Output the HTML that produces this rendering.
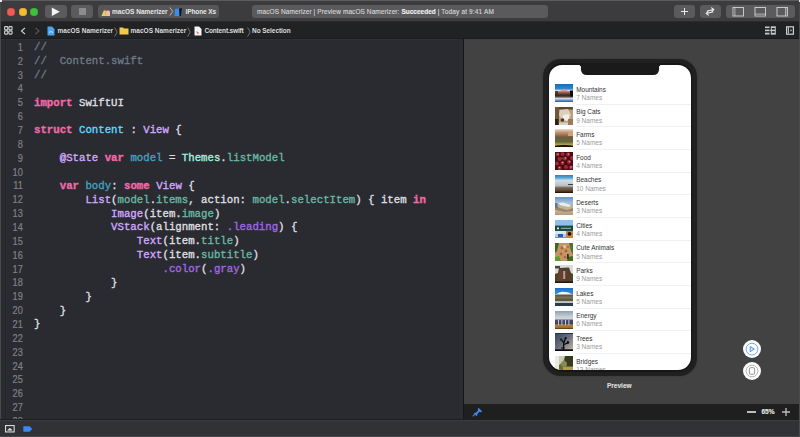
<!DOCTYPE html>
<html><head><meta charset="utf-8">
<style>
*{margin:0;padding:0;box-sizing:border-box}
html,body{width:800px;height:437px;overflow:hidden;background:#3a3a3c;font-family:"Liberation Sans",sans-serif}
.a{position:absolute}
#toolbar{left:0;top:0;width:800px;height:22px;background:#3c3c3e;border-top:1px solid #5c5c5e;border-bottom:1px solid #2a2a2c}
.btn{position:absolute;background:#5b5b5d;border-radius:3px}
.tl{position:absolute;width:8px;height:8px;border-radius:50%}
#jump{left:0;top:22px;width:800px;height:17px;background:#212224;border-bottom:1px solid #1b1c1e}
#editor{left:0;top:39px;width:463px;height:380px;background:#2a2b30;border-top:1px solid #303137;overflow:hidden}
#divider{left:463px;top:39px;width:1px;height:381px;background:#161618}
#preview{left:464px;top:39px;width:336px;height:365px;background:#424242}
#pbar{left:464px;top:404px;width:336px;height:16px;background:#1f1f1f}
#status{left:0;top:420px;width:800px;height:17px;background:#313235;border-top:1px solid #3b3c3f;border-bottom:1.5px solid #46474a}
.ln{position:absolute;left:0;width:22.8px;text-align:right;font-family:"Liberation Sans",sans-serif;font-size:10.2px;color:#808084;-webkit-text-stroke:0.2px currentColor;transform:scaleX(0.9);transform-origin:100% 50%}
.code{position:absolute;left:34px;font-family:"Liberation Mono",monospace;font-size:10.71px;white-space:pre;color:#dfdfe0;-webkit-text-stroke:0.35px currentColor}
.k{color:#f268a8;font-weight:bold}
.c{color:#6c7986}
.td{color:#5dd8ff}
.oc{color:#d0a8ff}
.od{color:#41a1c0}
.pt{color:#9ef1dd}
.pp{color:#67b7a4}
.of{color:#a167e6}
.tt{position:absolute;white-space:pre;font-size:6.5px;line-height:8px}
.row{position:absolute;left:0;width:142px;height:22.69px}
.thumb{position:absolute;left:5.7px;top:0;width:18px;height:18px}
.rt{position:absolute;left:26.9px;font-size:6.45px;white-space:pre;color:#333335}
.rs{position:absolute;left:26.9px;font-size:6.5px;white-space:pre;color:#9a9a9e}
.sep{position:absolute;left:26.5px;right:0;height:1px;background:#f0f0f3}
</style></head><body>

<!-- Toolbar -->
<div id="toolbar" class="a"></div>
<div class="tl" style="left:6.9px;top:7.5px;background:#f05c54;box-shadow:inset 0 0 0 0.5px #d04840"></div>
<div class="tl" style="left:18.6px;top:7.5px;background:#f2bd36;box-shadow:inset 0 0 0 0.5px #d09a28"></div>
<div class="tl" style="left:30.4px;top:7.5px;background:#40c040;box-shadow:inset 0 0 0 0.5px #30a030"></div>

<div class="btn" style="left:45px;top:5px;width:21.5px;height:13px"></div>
<svg class="a" style="left:51px;top:7px" width="10" height="10" viewBox="0 0 10 10"><path d="M0.8 0.6 L8.8 4.8 L0.8 9 Z" fill="#f4f4f4"/></svg>
<div class="btn" style="left:71px;top:5px;width:21.5px;height:13px"></div>
<div class="a" style="left:78.6px;top:7.9px;width:7.2px;height:7.1px;background:#8c8c8e"></div>

<div class="btn" style="left:97.5px;top:5px;width:121.5px;height:12.8px;background:#565658"></div>
<svg class="a" style="left:100px;top:6.5px" width="11" height="10" viewBox="0 0 11 10"><path d="M1.5 9 L3.5 4 L6 3.5 L5 9 Z" fill="#e6d25a"/><path d="M5 9 L6 4 L8 3 L10 4.5 L10 9 Z" fill="#e8bfa8"/><path d="M6 4 L7 2 L8.5 3.2 Z" fill="#a8404a"/><path d="M3.5 4 L4.5 2.5 L6 3.5 Z" fill="#c08860"/></svg>
<div class="tt" style="left:112px;top:7.5px;color:#e6e6e6;font-weight:bold">macOS Namerizer</div>
<svg class="a" style="left:168.5px;top:7px" width="5" height="9" viewBox="0 0 5 9"><path d="M0.8 0.5 L3.8 4.5 L0.8 8.5" fill="none" stroke="#bdbdbd" stroke-width="0.9"/></svg>
<svg class="a" style="left:174px;top:6.5px" width="9" height="10" viewBox="0 0 9 10"><path d="M1 2 L8 1 L7 9 L0.5 9 Z" fill="#3a8ee8"/><path d="M5 1.5 L8 1 L7 9 L5.5 9 Z" fill="#111"/></svg>
<div class="tt" style="left:185.6px;top:7.5px;color:#e6e6e6;font-weight:bold;letter-spacing:-0.12px">iPhone Xs</div>

<div class="btn" style="left:252px;top:5px;width:296px;height:13px;background:#5a5a5c"></div>
<div class="tt" style="left:257px;top:7.5px;color:#d6d6d6;-webkit-text-stroke:0.12px currentColor"><span style="letter-spacing:0.085px">macOS Namerizer | Preview macOS Namerizer: </span><b style="color:#f0f0f0">Succeeded</b><span id="tail" style="letter-spacing:0.15px"> | Today at 9:41 AM</span></div>

<div class="btn" style="left:673.7px;top:5px;width:21.5px;height:12.5px"></div>
<svg class="a" style="left:680px;top:7px" width="9" height="9" viewBox="0 0 9 9"><path d="M4.5 1 V8 M1 4.5 H8" stroke="#e8e8e8" stroke-width="1"/></svg>
<div class="btn" style="left:700px;top:5px;width:21px;height:12.5px"></div>
<svg class="a" style="left:704px;top:6px" width="12" height="11" viewBox="0 0 12 11"><path d="M3.2 5 L9.6 3.6 M7.6 1.9 L9.8 3.5 L8.1 5.4" fill="none" stroke="#e8e8e8" stroke-width="1.15" stroke-linecap="round" stroke-linejoin="round"/><path d="M8.8 6 L2.4 7.4 M4.4 9.1 L2.2 7.5 L3.9 5.6" fill="none" stroke="#e8e8e8" stroke-width="1.15" stroke-linecap="round" stroke-linejoin="round"/></svg>
<div class="btn" style="left:726px;top:5px;width:69px;height:12.5px"></div>
<svg class="a" style="left:726px;top:5px" width="69" height="13" viewBox="0 0 69 13">
<g fill="none" stroke="#d4d4d4" stroke-width="0.9"><rect x="7" y="2.5" width="10.5" height="8.5"/><path d="M8.8 2.5 V11"/>
<rect x="29" y="2.5" width="10.5" height="8.5"/><path d="M29 9.2 H39.5"/>
<rect x="51" y="2.5" width="10.5" height="8.5"/><path d="M59.7 2.5 V11"/></g>
<g fill="#7a7a7c"><rect x="7.5" y="3" width="1" height="7.5"/><rect x="29.5" y="9.6" width="9.5" height="1"/><rect x="60.1" y="3" width="1" height="7.5"/></g>
</svg>

<!-- Jump bar -->
<div id="jump" class="a"></div>
<svg class="a" style="left:4px;top:26px" width="9" height="9" viewBox="0 0 9 9"><g fill="none" stroke="#d4d4d4" stroke-width="1.1"><rect x="0.6" y="0.6" width="3.2" height="3.2" rx="0.8"/><rect x="4.9" y="0.6" width="3.2" height="3.2" rx="0.8"/><rect x="0.6" y="4.9" width="3.2" height="3.2" rx="0.8"/><rect x="4.9" y="4.9" width="3.2" height="3.2" rx="0.8"/></g></svg>
<svg class="a" style="left:20px;top:27px" width="7" height="8" viewBox="0 0 7 8"><path d="M5 0.8 L1.5 4 L5 7.2" fill="none" stroke="#d8d8d8" stroke-width="1.1"/></svg>
<svg class="a" style="left:34px;top:27px" width="7" height="8" viewBox="0 0 7 8"><path d="M1.5 0.8 L5 4 L1.5 7.2" fill="none" stroke="#5a5a5c" stroke-width="1.1"/></svg>
<svg class="a" style="left:46.5px;top:26px" width="8" height="10" viewBox="0 0 8 10"><path d="M0.5 0.5 H5 L7.5 3 V9.5 H0.5 Z" fill="#4aa3f5"/><path d="M2 6.5 Q4 4.5 6 6.5" fill="none" stroke="#fff" stroke-width="0.7"/></svg>
<div class="tt" style="left:57.5px;top:27px;color:#dcdcdc;font-weight:bold">macOS Namerizer</div>
<svg class="a" style="left:113.5px;top:26.5px" width="4" height="10" viewBox="0 0 4 10"><path d="M0.6 0.5 L3.2 5 L0.6 9.5" fill="none" stroke="#8e8e90" stroke-width="0.75"/></svg>
<svg class="a" style="left:119px;top:27.3px" width="10" height="8" viewBox="0 0 10 8"><path d="M0.5 0.5 H4 L5 1.5 H9.5 V7.5 H0.5 Z" fill="#f2c94c"/></svg>
<div class="tt" style="left:130.6px;top:27px;color:#dcdcdc;font-weight:bold">macOS Namerizer</div>
<svg class="a" style="left:186.8px;top:26.5px" width="4" height="10" viewBox="0 0 4 10"><path d="M0.6 0.5 L3.2 5 L0.6 9.5" fill="none" stroke="#8e8e90" stroke-width="0.75"/></svg>
<svg class="a" style="left:194px;top:26px" width="8" height="10" viewBox="0 0 8 10"><path d="M0.5 0.5 H5 L7.5 3 V9.5 H0.5 Z" fill="#f4f4f4"/><path d="M2.5 5 L5.5 7.5 L3 7.5 Z" fill="#e5523a"/></svg>
<div class="tt" style="left:204.4px;top:27px;color:#dcdcdc;font-weight:bold;letter-spacing:-0.15px">Content.swift</div>
<svg class="a" style="left:246.5px;top:26.5px" width="4" height="10" viewBox="0 0 4 10"><path d="M0.6 0.5 L3.2 5 L0.6 9.5" fill="none" stroke="#8e8e90" stroke-width="0.75"/></svg>
<div class="tt" style="left:252px;top:27px;color:#dcdcdc;font-weight:bold;letter-spacing:-0.06px">No Selection</div>
<svg class="a" style="left:765px;top:26px" width="11" height="9" viewBox="0 0 11 9"><g fill="#c8c8c8"><rect x="0" y="0.5" width="4.5" height="1.6"/><rect x="0" y="3.6" width="4.5" height="1.6"/><rect x="0" y="6.7" width="4.5" height="1.8"/><rect x="5.8" y="0.3" width="5" height="8.4"/></g><g fill="#212224"><rect x="6.8" y="2" width="3" height="1.6"/><rect x="6.8" y="5.2" width="3" height="1.6"/></g><rect x="4.8" y="3.8" width="1" height="1.2" fill="#c8c8c8"/></svg>
<svg class="a" style="left:786px;top:26px" width="8" height="9" viewBox="0 0 8 9"><rect x="0" y="0.2" width="8" height="8.6" fill="#d0d0d0"/><rect x="1.2" y="1.4" width="5.6" height="6.2" fill="#212224"/><rect x="1.9" y="1.2" width="1" height="6.3" fill="#d0d0d0"/><path d="M4.5 3 L6 4.35 L4.5 5.7 Z" fill="#d0d0d0"/></svg>

<!-- Editor -->
<div id="editor" class="a">
<div class="ln" style="top:0.80px;line-height:13.86px">1</div>
<div class="code" style="top:1.20px;line-height:13.86px"><span class="c">//</span></div>
<div class="ln" style="top:14.66px;line-height:13.86px">2</div>
<div class="code" style="top:15.06px;line-height:13.86px"><span class="c">//  Content.swift</span></div>
<div class="ln" style="top:28.52px;line-height:13.86px">3</div>
<div class="code" style="top:28.92px;line-height:13.86px"><span class="c">//</span></div>
<div class="ln" style="top:42.38px;line-height:13.86px">4</div>
<div class="ln" style="top:56.24px;line-height:13.86px">5</div>
<div class="code" style="top:56.64px;line-height:13.86px"><span class="k">import</span> SwiftUI</div>
<div class="ln" style="top:70.10px;line-height:13.86px">6</div>
<div class="ln" style="top:83.96px;line-height:13.86px">7</div>
<div class="code" style="top:84.36px;line-height:13.86px"><span class="k">struct</span> <span class="td">Content</span> : <span class="oc">View</span> {</div>
<div class="ln" style="top:97.82px;line-height:13.86px">8</div>
<div class="ln" style="top:111.68px;line-height:13.86px">9</div>
<div class="code" style="top:112.08px;line-height:13.86px">    <span class="oc">@State</span> <span class="k">var</span> <span class="od">model</span> = <span class="pt">Themes</span>.<span class="pp">listModel</span></div>
<div class="ln" style="top:125.54px;line-height:13.86px">10</div>
<div class="ln" style="top:139.40px;line-height:13.86px">11</div>
<div class="code" style="top:139.80px;line-height:13.86px">    <span class="k">var</span> <span class="od">body</span>: <span class="k">some</span> <span class="oc">View</span> {</div>
<div class="ln" style="top:153.26px;line-height:13.86px">12</div>
<div class="code" style="top:153.66px;line-height:13.86px">        <span class="oc">List</span>(<span class="pp">model</span>.<span class="pp">items</span>, action: <span class="pp">model</span>.<span class="pp">selectItem</span>) { item <span class="k">in</span></div>
<div class="ln" style="top:167.12px;line-height:13.86px">13</div>
<div class="code" style="top:167.52px;line-height:13.86px">            <span class="oc">Image</span>(item.<span class="pp">image</span>)</div>
<div class="ln" style="top:180.98px;line-height:13.86px">14</div>
<div class="code" style="top:181.38px;line-height:13.86px">            <span class="oc">VStack</span>(alignment: <span class="of">.leading</span>) {</div>
<div class="ln" style="top:194.84px;line-height:13.86px">15</div>
<div class="code" style="top:195.24px;line-height:13.86px">                <span class="oc">Text</span>(item.<span class="pp">title</span>)</div>
<div class="ln" style="top:208.70px;line-height:13.86px">16</div>
<div class="code" style="top:209.10px;line-height:13.86px">                <span class="oc">Text</span>(item.<span class="pp">subtitle</span>)</div>
<div class="ln" style="top:222.56px;line-height:13.86px">17</div>
<div class="code" style="top:222.96px;line-height:13.86px">                    <span class="of">.color</span>(<span class="of">.gray</span>)</div>
<div class="ln" style="top:236.42px;line-height:13.86px">18</div>
<div class="code" style="top:236.82px;line-height:13.86px">            }</div>
<div class="ln" style="top:250.28px;line-height:13.86px">19</div>
<div class="code" style="top:250.68px;line-height:13.86px">        }</div>
<div class="ln" style="top:264.14px;line-height:13.86px">20</div>
<div class="code" style="top:264.54px;line-height:13.86px">    }</div>
<div class="ln" style="top:278.00px;line-height:13.86px">21</div>
<div class="code" style="top:278.40px;line-height:13.86px">}</div>
<div class="ln" style="top:291.86px;line-height:13.86px">22</div>
<div class="ln" style="top:305.72px;line-height:13.86px">23</div>
<div class="ln" style="top:319.58px;line-height:13.86px">24</div>
<div class="ln" style="top:333.44px;line-height:13.86px">25</div>
<div class="ln" style="top:347.30px;line-height:13.86px">26</div>
<div class="ln" style="top:361.16px;line-height:13.86px">27</div>
<div class="ln" style="top:375.02px;line-height:13.86px">28</div>
</div>
<div class="a" style="left:459.3px;top:39px;width:3.7px;height:381px;background:#2c2d33"></div>
<div id="divider" class="a"></div>
<div class="a" style="left:0;top:0;width:1px;height:437px;background:#48494c"></div>
<div class="a" style="left:5px;top:39px;width:1px;height:381px;background:#25262b"></div>

<!-- Preview -->
<div id="preview" class="a"></div>
<!-- Phone -->
<div class="a" style="left:543.2px;top:59px;width:153.6px;height:317.4px;border-radius:18px;background:#202020;box-shadow:0 0 2px rgba(0,0,0,0.25)"></div>
<div class="a" style="left:548px;top:63.4px;width:144.2px;height:308.3px;border-radius:14px;background:#161616"></div>
<div class="a" id="screen" style="left:549.3px;top:64.6px;width:141.6px;height:305.9px;border-radius:13px;background:#fff;overflow:hidden">
<svg class="a" style="left:5.7px;top:19.40px" width="18" height="18" viewBox="0 0 18 18"><defs><linearGradient id="m1" x1="0" y1="0" x2="0" y2="1"><stop offset="0" stop-color="#1c6ab8"/><stop offset="0.25" stop-color="#2e86cc"/><stop offset="0.3" stop-color="#5aa4dc"/><stop offset="0.36" stop-color="#d0e4f0"/><stop offset="0.4" stop-color="#c88878"/><stop offset="0.52" stop-color="#7a4a3c"/><stop offset="0.62" stop-color="#2e2e28"/><stop offset="0.68" stop-color="#3a3a30"/><stop offset="0.74" stop-color="#a86a5c"/><stop offset="0.8" stop-color="#d0dcec"/><stop offset="0.9" stop-color="#6a9ccc"/><stop offset="1" stop-color="#1e5aa0"/></linearGradient></defs><rect width="18" height="18" fill="url(#m1)"/><path d="M5 7 L8 5.2 L10.5 5.4 L13 7 Z" fill="#e09a88"/><rect x="0" y="7" width="3" height="5" fill="#3a2a20" opacity="0.7"/><rect x="15" y="6.5" width="3" height="6" fill="#0e0e0e"/></svg>
<div class="rt" style="top:21.15px">Mountains</div>
<div class="rs" style="top:29.30px">7 Names</div>
<svg class="a" style="left:5.7px;top:42.06px" width="18" height="18" viewBox="0 0 18 18"><rect width="18" height="18" fill="#b8a080"/><rect width="18" height="2.5" fill="#5a4a30"/><rect width="4" height="18" fill="#6a5a3a"/><rect x="0" y="12" width="3.5" height="6" fill="#2a2418"/><path d="M5 3 L13 2 L16 8 L13 14 L7 13 L4 8Z" fill="#dccfb8"/><path d="M8 8 L14 7 L14 13 L8 14Z" fill="#f0eee8"/><circle cx="7.5" cy="13" r="1.8" fill="#4a3028"/><rect x="13" y="12" width="5" height="6" fill="#9a7a58"/><rect x="4" y="15.5" width="9" height="2.5" fill="#d8d0c0"/></svg>
<div class="rt" style="top:43.81px">Big Cats</div>
<div class="rs" style="top:51.96px">9 Names</div>
<div class="sep" style="top:39.16px"></div>
<svg class="a" style="left:5.7px;top:64.72px" width="18" height="18" viewBox="0 0 18 18"><defs><linearGradient id="f1" x1="0" y1="0" x2="0" y2="1"><stop offset="0" stop-color="#e8dcc8"/><stop offset="0.2" stop-color="#c09070"/><stop offset="0.45" stop-color="#705a40"/><stop offset="0.7" stop-color="#606838"/><stop offset="0.88" stop-color="#b8a450"/><stop offset="1" stop-color="#1e1a10"/></linearGradient></defs><rect width="18" height="18" fill="url(#f1)"/><rect x="13" y="3" width="5" height="4" fill="#d0a070"/><path d="M0 17 Q9 15 18 17 V18 H0Z" fill="#1a1408"/></svg>
<div class="rt" style="top:66.47px">Farms</div>
<div class="rs" style="top:74.62px">5 Names</div>
<div class="sep" style="top:61.82px"></div>
<svg class="a" style="left:5.7px;top:87.38px" width="18" height="18" viewBox="0 0 18 18"><rect width="18" height="18" fill="#4a0a10"/><g fill="#a02838"><circle cx="2.5" cy="2.5" r="2"/><circle cx="7.5" cy="2" r="2"/><circle cx="13" cy="2.5" r="2"/><circle cx="17" cy="6" r="2"/><circle cx="4.5" cy="7" r="2"/><circle cx="10" cy="6.5" r="2"/><circle cx="14" cy="10" r="2"/><circle cx="2" cy="11.5" r="2"/><circle cx="7.5" cy="11" r="2"/><circle cx="11" cy="15" r="2"/><circle cx="4.5" cy="16" r="2"/><circle cx="16" cy="15.5" r="2"/></g><g fill="#e090a0"><circle cx="3" cy="2" r="0.8"/><circle cx="13.5" cy="2" r="0.8"/><circle cx="10.5" cy="6" r="0.8"/><circle cx="7.5" cy="10.5" r="0.8"/><circle cx="14.5" cy="9.5" r="0.8"/><circle cx="4.5" cy="15.5" r="0.8"/><circle cx="16" cy="15" r="0.8"/></g><circle cx="7" cy="6.5" r="1" fill="#506028"/></svg>
<div class="rt" style="top:89.13px">Food</div>
<div class="rs" style="top:97.28px">4 Names</div>
<div class="sep" style="top:84.48px"></div>
<svg class="a" style="left:5.7px;top:110.04px" width="18" height="18" viewBox="0 0 18 18"><defs><linearGradient id="b1" x1="0" y1="0" x2="0" y2="1"><stop offset="0" stop-color="#2684c4"/><stop offset="0.15" stop-color="#5aa4d4"/><stop offset="0.3" stop-color="#d0dce4"/><stop offset="0.6" stop-color="#b8c0c6"/><stop offset="0.7" stop-color="#7a6a58"/><stop offset="0.88" stop-color="#5a4028"/><stop offset="1" stop-color="#140e08"/></linearGradient></defs><rect width="18" height="18" fill="url(#b1)"/><rect x="13" y="9" width="5" height="1" fill="#3a4048"/></svg>
<div class="rt" style="top:111.79px">Beaches</div>
<div class="rs" style="top:119.94px">10 Names</div>
<div class="sep" style="top:107.14px"></div>
<svg class="a" style="left:5.7px;top:132.70px" width="18" height="18" viewBox="0 0 18 18"><defs><linearGradient id="d1" x1="0" y1="0" x2="0" y2="1"><stop offset="0" stop-color="#6a92c0"/><stop offset="0.3" stop-color="#9cc0e0"/><stop offset="0.45" stop-color="#b8b4a8"/><stop offset="0.75" stop-color="#c8b494"/><stop offset="1" stop-color="#b09a7c"/></linearGradient></defs><rect width="18" height="18" fill="url(#d1)"/><path d="M3 6 L8 5.5 L16 8 L14 10 L6 8.5Z" fill="#ecebe4"/><path d="M0 9 L5 11 L12 13 L18 11 V14 L10 15 L0 13Z" fill="#9a8668"/><rect x="0" y="6" width="2.5" height="5" fill="#6a7488"/></svg>
<div class="rt" style="top:134.45px">Deserts</div>
<div class="rs" style="top:142.60px">3 Names</div>
<div class="sep" style="top:129.80px"></div>
<svg class="a" style="left:5.7px;top:155.36px" width="18" height="18" viewBox="0 0 18 18"><rect width="18" height="18" fill="#a8d0f0"/><rect y="0" width="18" height="5" fill="#90c0e8"/><rect y="5.5" width="18" height="5.5" fill="#1c4a42"/><rect x="2" y="7.5" width="2" height="1.8" fill="#d8e8e8"/><rect x="6" y="7.8" width="10" height="1" fill="#90b8b0"/><rect x="6" y="11" width="1" height="3" fill="#1a2a40"/><rect x="3" y="14" width="5" height="4" fill="#3058a8"/><rect x="0" y="11" width="11" height="3" fill="#d8e8f4"/><rect x="11" y="11" width="7" height="7" fill="#c88440"/><circle cx="14.5" cy="13.8" r="1.9" fill="#1a1008"/><rect y="17" width="11" height="1" fill="#8090a0"/></svg>
<div class="rt" style="top:157.11px">Cities</div>
<div class="rs" style="top:165.26px">4 Names</div>
<div class="sep" style="top:152.46px"></div>
<svg class="a" style="left:5.7px;top:178.02px" width="18" height="18" viewBox="0 0 18 18"><rect width="18" height="18" fill="#c89464"/><path d="M0 0 H4 L2 8 L0 10Z" fill="#3a6a20"/><path d="M14 0 H18 V12 L16 8Z" fill="#4a7a28"/><path d="M0 14 L4 13 L6 18 H0Z" fill="#58a030"/><path d="M13 14 L18 13 V18 H12Z" fill="#3a7020"/><g fill="#a06840"><circle cx="7" cy="5" r="1.4"/><circle cx="11" cy="8" r="1.4"/><circle cx="6" cy="11" r="1.4"/><circle cx="10" cy="14" r="1.2"/><circle cx="13" cy="4" r="1"/></g><circle cx="9.5" cy="3.5" r="1.5" fill="#e0c8a8"/><rect x="12" y="11" width="1.8" height="5" fill="#3a3020"/></svg>
<div class="rt" style="top:179.77px">Cute Animals</div>
<div class="rs" style="top:187.92px">5 Names</div>
<div class="sep" style="top:175.12px"></div>
<svg class="a" style="left:5.7px;top:200.68px" width="18" height="18" viewBox="0 0 18 18"><rect width="18" height="18" fill="#dcdcd4"/><rect x="0" y="1" width="5" height="2.5" fill="#4a4a40"/><path d="M4 3 L14 2.5 L16 8 L18 9 V18 H0 V9 L3 8Z" fill="#4a4230"/><path d="M4 5 L7.5 4 L8.5 18 L1.5 18Z" fill="#6a3c2a"/><path d="M10.5 4 L13.5 5 L16.5 18 L10 18Z" fill="#603a28"/><rect x="8.2" y="6" width="2" height="8" fill="#a8a498"/><rect x="0" y="9" width="2" height="9" fill="#3a4a28"/><rect x="16" y="9" width="2" height="9" fill="#3a5028"/><rect y="16.5" width="18" height="1.5" fill="#1e1610"/></svg>
<div class="rt" style="top:202.43px">Parks</div>
<div class="rs" style="top:210.58px">9 Names</div>
<div class="sep" style="top:197.78px"></div>
<svg class="a" style="left:5.7px;top:223.34px" width="18" height="18" viewBox="0 0 18 18"><defs><linearGradient id="l1" x1="0" y1="0" x2="0" y2="1"><stop offset="0" stop-color="#1a72cc"/><stop offset="1" stop-color="#3c90dc"/></linearGradient></defs><rect width="18" height="6" fill="url(#l1)"/><path d="M1 6.5 Q5 3 9.5 4 Q14 3.5 17 6.5 V7 H1Z" fill="#f2f5f8"/><rect y="6.5" width="18" height="7" fill="#5e5a3c"/><rect y="8.5" width="18" height="2" fill="#7a7450"/><rect y="13.5" width="18" height="1.5" fill="#c0c8d0"/><rect y="15" width="18" height="3" fill="#2a3a48"/></svg>
<div class="rt" style="top:225.09px">Lakes</div>
<div class="rs" style="top:233.24px">5 Names</div>
<div class="sep" style="top:220.44px"></div>
<svg class="a" style="left:5.7px;top:246.00px" width="18" height="18" viewBox="0 0 18 18"><defs><linearGradient id="e1" x1="0" y1="0" x2="0" y2="1"><stop offset="0" stop-color="#8aa0b8"/><stop offset="0.3" stop-color="#c4ccd4"/><stop offset="0.45" stop-color="#d8d8d4"/><stop offset="0.5" stop-color="#4a5070"/><stop offset="0.7" stop-color="#3a4060"/><stop offset="0.78" stop-color="#b88440"/><stop offset="0.95" stop-color="#9a6a28"/><stop offset="1" stop-color="#2a1a08"/></linearGradient></defs><rect width="18" height="18" fill="url(#e1)"/><g fill="#e8e8f0"><rect x="3" y="9" width="0.8" height="5"/><rect x="6.5" y="9" width="0.8" height="5"/><rect x="10" y="9" width="0.8" height="5"/><rect x="13.5" y="9" width="0.8" height="5"/></g></svg>
<div class="rt" style="top:247.75px">Energy</div>
<div class="rs" style="top:255.90px">6 Names</div>
<div class="sep" style="top:243.10px"></div>
<svg class="a" style="left:5.7px;top:268.66px" width="18" height="18" viewBox="0 0 18 18"><defs><linearGradient id="t1" x1="0" y1="0" x2="1" y2="1"><stop offset="0" stop-color="#3a4258"/><stop offset="0.5" stop-color="#6a7080"/><stop offset="1" stop-color="#c8b8a0"/></linearGradient></defs><rect width="18" height="18" fill="url(#t1)"/><rect y="0" width="18" height="1" fill="#2a3040"/><rect y="16.3" width="18" height="1.7" fill="#0c0c0c"/><path d="M8.3 16.5 L8.8 10 L6 6 M8.8 10 L10.5 5 M9 11.5 L12.5 10 L13 8.5" stroke="#0a0a0a" stroke-width="1.3" fill="none"/><circle cx="6" cy="6.5" r="1.2" fill="#1a2a20"/><circle cx="10.8" cy="5" r="1" fill="#0a0a0a"/><circle cx="13" cy="9.5" r="1.2" fill="#0a0a0a"/><rect x="6" y="14.5" width="4" height="1" fill="#0a0a0a"/></svg>
<div class="rt" style="top:270.41px">Trees</div>
<div class="rs" style="top:278.56px">3 Names</div>
<div class="sep" style="top:265.76px"></div>
<svg class="a" style="left:5.7px;top:291.32px" width="18" height="18" viewBox="0 0 18 18"><rect width="18" height="18" fill="#6a6a38"/><rect x="0" y="0" width="4" height="18" fill="#e8ece0"/><path d="M4 0 H10 L8 6 L4 9Z" fill="#c8ccb8"/><rect x="10" y="0" width="8" height="10" fill="#3a3a20"/><circle cx="9" cy="8" r="3" fill="#8a8a50"/><rect x="8" y="11" width="10" height="3" fill="#b0a040"/><rect x="4" y="14" width="14" height="4" fill="#4a6a28"/></svg>
<div class="rt" style="top:293.07px">Bridges</div>
<div class="rs" style="top:301.22px">13 Names</div>
<div class="sep" style="top:288.42px"></div>
</div>
<div class="a" style="left:581.3px;top:63px;width:77.7px;height:12px;background:#1a1a1a;border-radius:0 0 5.5px 5.5px"></div>
<div class="a" style="left:578.3px;top:64.6px;width:3px;height:3px;background:radial-gradient(circle at 0 100%, transparent 2.9px, #1a1a1a 3px)"></div>
<div class="a" style="left:659px;top:64.6px;width:3px;height:3px;background:radial-gradient(circle at 100% 100%, transparent 2.9px, #1a1a1a 3px)"></div>
<!-- /Phone -->
<div id="pbar" class="a"></div>
<div id="status" class="a"></div>
<div class="a" style="left:0;top:419px;width:800px;height:1px;background:#1d1d1f"></div>

<!-- Extras -->
<div class="tt" style="left:607px;top:381.5px;color:#dcdcdc;font-weight:bold;-webkit-text-stroke:0.15px currentColor">Preview</div>
<div class="a" style="left:743.2px;top:339.5px;width:18px;height:18px;border-radius:50%;background:#fdfdfd"></div>
<svg class="a" style="left:743.2px;top:339.5px" width="18" height="18" viewBox="0 0 18 18"><circle cx="9" cy="9.1" r="5.9" fill="none" stroke="#5a9ae6" stroke-width="0.85"/><path d="M7.2 6.5 L11.3 9.1 L7.2 11.7 Z" fill="#dde8f8" stroke="#4a8ae0" stroke-width="0.9" stroke-linejoin="round"/></svg>
<div class="a" style="left:743.2px;top:362.3px;width:18px;height:18px;border-radius:50%;background:#fdfdfd"></div>
<svg class="a" style="left:743.2px;top:362.3px" width="18" height="18" viewBox="0 0 18 18"><circle cx="9" cy="9" r="5.9" fill="none" stroke="#a8a8a8" stroke-width="0.85"/><rect x="6.4" y="5.7" width="5.2" height="6.6" rx="1.1" fill="none" stroke="#8a8a8a" stroke-width="0.9"/></svg>
<svg class="a" style="left:472px;top:406.5px" width="11" height="10" viewBox="0 0 11 10"><path d="M6.5 0.8 L10.2 4.5 L8.8 5.2 L7.5 4.8 L5.2 7.2 L5.3 8.5 L4.5 9 L2 6.5 L2.5 5.7 L3.8 5.8 L6.2 3.5 L5.8 2.2 Z" fill="#3d8cf0"/><path d="M3 7.2 L0.8 9.4" stroke="#3d8cf0" stroke-width="1.1"/></svg>
<div class="a" style="left:746.8px;top:411.3px;width:9.2px;height:1.3px;background:#bdbdbd"></div>
<div class="tt" style="left:761.5px;top:408px;color:#e4e4e4;font-weight:bold;-webkit-text-stroke:0.15px currentColor">65%</div>
<svg class="a" style="left:782px;top:408px" width="8" height="8" viewBox="0 0 8 8"><path d="M4 0 V8 M0 4 H8" stroke="#bdbdbd" stroke-width="1.3"/></svg>
<svg class="a" style="left:4.8px;top:424.6px" width="10" height="8" viewBox="0 0 10 8"><rect x="0.55" y="0.55" width="8.6" height="6.4" fill="none" stroke="#d8d8d8" stroke-width="1.1"/><path d="M2.6 5.3 L4.85 3 L7.1 5.3 Z" fill="#d8d8d8" stroke="#d8d8d8" stroke-width="0.6" stroke-linejoin="round"/></svg>
<svg class="a" style="left:22.9px;top:425.6px" width="10" height="7" viewBox="0 0 10 7"><path d="M1.2 0.3 H6.6 L9.3 3 L6.6 5.8 H1.2 Q0.3 5.8 0.3 4.9 V1.2 Q0.3 0.3 1.2 0.3 Z" fill="#3a88f0"/></svg>
<!-- /Extras -->
<div class="a" style="left:799px;top:0;width:1px;height:437px;background:#4a4a4e"></div>
<div class="a" style="left:0;top:0;width:1.5px;height:1.5px;background:#e8e8e8"></div>
<div class="a" style="left:798.5px;top:0;width:1.5px;height:1.5px;background:#e8e8e8"></div>
</body></html>
